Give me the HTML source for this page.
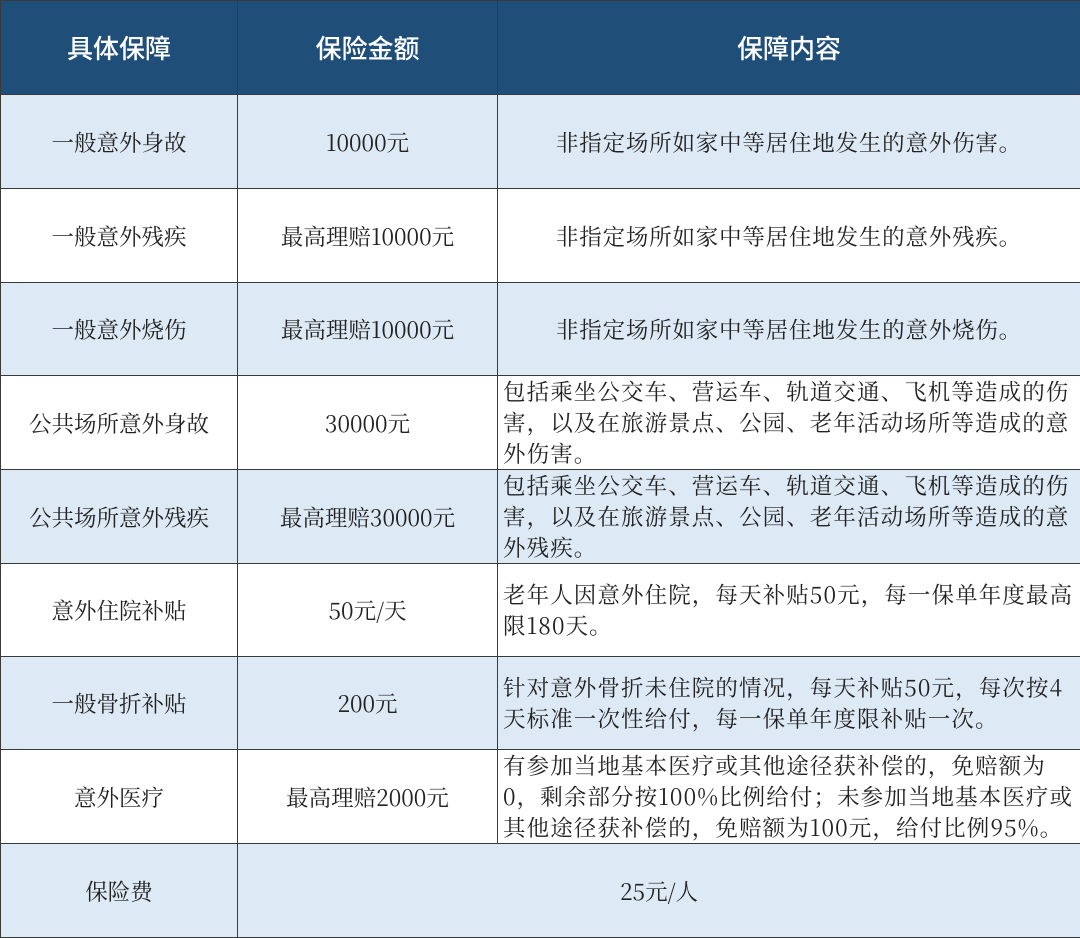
<!DOCTYPE html>
<html><head><meta charset="utf-8"><style>
html,body{margin:0;padding:0;width:1080px;height:938px;overflow:hidden;background:#fff}
table{border-collapse:collapse;table-layout:fixed;width:1080px;position:absolute;left:0;top:0}
td,th{border:1.5px solid #3a3a3a;padding:0;font-family:"Noto Serif CJK SC","Liberation Serif",serif;font-size:22.5px;color:#222;text-align:center;vertical-align:middle;font-weight:normal;overflow:hidden;white-space:nowrap}
th{background:#1f4e79;color:#fff;font-family:"Noto Sans CJK SC","Liberation Sans",sans-serif;font-size:26px;font-weight:500}
tr.l td{background:#dde9f5}
td.t{text-align:left;padding:0 0 0 5px;line-height:31px;font-size:22.5px;letter-spacing:1.1px}
td.c{text-align:center;letter-spacing:0.8px}
</style></head><body>
<table>
<colgroup><col style="width:237px"><col style="width:260px"><col style="width:583px"></colgroup>
<tr style="height:94px"><th>具体保障</th><th>保险金额</th><th>保障内容</th></tr>
<tr class="l" style="height:94px"><td>一般意外身故</td><td>10000元</td><td class="c">非指定场所如家中等居住地发生的意外伤害。</td></tr>
<tr style="height:94px"><td>一般意外残疾</td><td>最高理赔10000元</td><td class="c">非指定场所如家中等居住地发生的意外残疾。</td></tr>
<tr class="l" style="height:93px"><td>一般意外烧伤</td><td>最高理赔10000元</td><td class="c">非指定场所如家中等居住地发生的意外烧伤。</td></tr>
<tr style="height:93px"><td>公共场所意外身故</td><td>30000元</td><td class="t">包括乘坐公交车、营运车、轨道交通、飞机等造成的伤<br>害，以及在旅游景点、公园、老年活动场所等造成的意<br>外伤害。</td></tr>
<tr class="l" style="height:94px"><td>公共场所意外残疾</td><td>最高理赔30000元</td><td class="t">包括乘坐公交车、营运车、轨道交通、飞机等造成的伤<br>害，以及在旅游景点、公园、老年活动场所等造成的意<br>外残疾。</td></tr>
<tr style="height:93px"><td>意外住院补贴</td><td>50元/天</td><td class="t">老年人因意外住院，每天补贴50元，每一保单年度最高<br>限180天。</td></tr>
<tr class="l" style="height:93px"><td>一般骨折补贴</td><td>200元</td><td class="t">针对意外骨折未住院的情况，每天补贴50元，每次按4<br>天标准一次性给付，每一保单年度限补贴一次。</td></tr>
<tr style="height:94px"><td>意外医疗</td><td>最高理赔2000元</td><td class="t">有参加当地基本医疗或其他途径获补偿的，免赔额为<br>0，剩余部分按100%比例给付；未参加当地基本医疗或<br>其他途径获补偿的，免赔额为100元，给付比例95%。</td></tr>
<tr class="l" style="height:94px"><td>保险费</td><td colspan="2">25元/人</td></tr>
</table>
</body></html>
